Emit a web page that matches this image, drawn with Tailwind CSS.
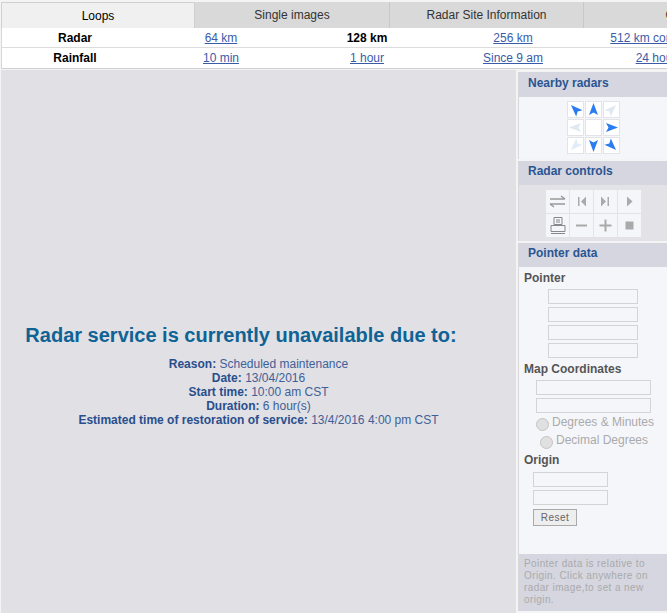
<!doctype html>
<html><head><meta charset="utf-8"><script src="https://cdn.jsdelivr.net/npm/@tailwindcss/browser@4"></script></head>
<body class="bg-white">
<div class="w-[667px] h-[613px] overflow-hidden bg-[#f4f4f4] font-['Liberation_Sans',sans-serif] text-[12px] flex flex-col">
  <div class="flex w-[800px] h-[26px] mt-[2px] pl-[1px] shrink-0 text-[#333]">
    <div class="w-[194px] flex items-center justify-center bg-[#f0f0f0] border-t border-l border-r border-[#d0d0d0] font-normal text-black">Loops</div>
    <div class="w-[194px] flex items-center justify-center bg-[#d9d9d9]">Single images</div>
    <div class="w-[194px] flex items-center justify-center bg-[#d9d9d9] border-l border-[#c8c8c8]">Radar Site Information</div>
    <div class="w-[194px] flex items-center justify-center bg-[#d9d9d9] border-l border-[#c8c8c8]">Other</div>
  </div>
  <div class="w-[800px] bg-white border-l border-[#d8d8d8] ml-[1px] shrink-0">
    <div class="flex h-[20px] items-center border-b border-[#dcdcdc] text-center">
      <div class="w-[146px] font-bold text-black">Radar</div>
      <a class="w-[146px] underline text-[#3a5ca8]">64 km</a>
      <div class="w-[146px] font-bold text-black">128 km</div>
      <a class="w-[146px] underline text-[#3a5ca8]">256 km</a>
      <a class="w-[146px] underline text-[#3a5ca8] whitespace-nowrap">512 km composite</a>
    </div>
    <div class="flex h-[21px] items-center border-b border-[#cfcfcf] text-center">
      <div class="w-[146px] font-bold text-black">Rainfall</div>
      <a class="w-[146px] underline text-[#3a5ca8]">10 min</a>
      <a class="w-[146px] underline text-[#3a5ca8]">1 hour</a>
      <a class="w-[146px] underline text-[#3a5ca8]">Since 9 am</a>
      <a class="w-[146px] underline text-[#3a5ca8] whitespace-nowrap">24 hours</a>
    </div>
  </div>
  <div class="flex flex-1 mt-[1px] pl-[1px] min-h-0">
    <main class="w-[515px] bg-[#e0e0e5] flex flex-col items-center pt-[254px] shrink-0">
      <h1 class="text-[20px] leading-[23px] font-bold text-[#0f6394] pr-[35px] whitespace-nowrap">Radar service is currently unavailable due to:</h1>
      <div class="mt-[10px] text-center leading-[14px] text-[#3f5f96]">
        <div><b class="text-[#2a4e8c]">Reason:</b> Scheduled maintenance</div>
        <div><b class="text-[#2a4e8c]">Date:</b> 13/04/2016</div>
        <div><b class="text-[#2a4e8c]">Start time:</b> 10:00 am CST</div>
        <div><b class="text-[#2a4e8c]">Duration:</b> 6 hour(s)</div>
        <div><b class="text-[#2a4e8c]">Estimated time of restoration of service:</b> 13/4/2016 4:00 pm CST</div>
      </div>
    </main>
    <aside class="w-[149px] ml-[2px] pt-[2px] flex flex-col shrink-0">
      <section class="h-[87px] bg-[#f5f6fa] border-l border-[#d8d8d8]">
        <h2 class="h-[25px] bg-[#d5d6e0] pl-[9px] pt-[4px] leading-[14px] font-bold text-[#2a5591]">Nearby radars</h2>
        <div class="grid grid-cols-[15px_15px_15px] grid-rows-[15px_15px_15px] gap-[3px] w-max ml-[49px] mt-[5px]">
          <div class="bg-white outline outline-[#e4e4e8]"><svg viewBox="0 0 15 15" class="w-[15px] h-[15px]"><polygon points="7.5,1 12,13 7.5,10.5 3,13" fill="#2a7cf0" transform="rotate(-45 7.5 7.5)"/></svg></div>
          <div class="bg-white outline outline-[#e4e4e8]"><svg viewBox="0 0 15 15" class="w-[15px] h-[15px]"><polygon points="7.5,1 12,13 7.5,10.5 3,13" fill="#2a7cf0"/></svg></div>
          <div class="bg-white outline outline-[#e4e4e8]"><svg viewBox="0 0 15 15" class="w-[15px] h-[15px]"><polygon points="7.5,1 12,13 7.5,10.5 3,13" fill="#e2e8f2" transform="rotate(45 7.5 7.5)"/></svg></div>
          <div class="bg-white outline outline-[#e4e4e8]"><svg viewBox="0 0 15 15" class="w-[15px] h-[15px]"><polygon points="7.5,1 12,13 7.5,10.5 3,13" fill="#e2e8f2" transform="rotate(-90 7.5 7.5)"/></svg></div>
          <div class="bg-white outline outline-[#e4e4e8]"></div>
          <div class="bg-white outline outline-[#e4e4e8]"><svg viewBox="0 0 15 15" class="w-[15px] h-[15px]"><polygon points="7.5,1 12,13 7.5,10.5 3,13" fill="#2a7cf0" transform="rotate(90 7.5 7.5)"/></svg></div>
          <div class="bg-white outline outline-[#e4e4e8]"><svg viewBox="0 0 15 15" class="w-[15px] h-[15px]"><polygon points="7.5,1 12,13 7.5,10.5 3,13" fill="#e2ebf8" transform="rotate(-135 7.5 7.5)"/></svg></div>
          <div class="bg-white outline outline-[#e4e4e8]"><svg viewBox="0 0 15 15" class="w-[15px] h-[15px]"><polygon points="7.5,1 12,13 7.5,10.5 3,13" fill="#2a7cf0" transform="rotate(180 7.5 7.5)"/></svg></div>
          <div class="bg-white outline outline-[#e4e4e8]"><svg viewBox="0 0 15 15" class="w-[15px] h-[15px]"><polygon points="7.5,1 12,13 7.5,10.5 3,13" fill="#2a7cf0" transform="rotate(135 7.5 7.5)"/></svg></div>
        </div>
      </section>
      <section class="h-[80px] mt-[2px] bg-[#e2e2e7] border-l border-[#d8d8d8]">
        <h2 class="h-[24px] bg-[#d5d6e0] pl-[9px] pt-[3px] leading-[14px] font-bold text-[#2a5591]">Radar controls</h2>
        <div class="grid grid-cols-[23px_23px_23px_23px] grid-rows-[23px_23px] gap-[1px] w-max ml-[27px] mt-[5px]">
          <div class="bg-[#f5f6fa] flex items-center justify-center"><svg viewBox="0 0 23 23" class="w-[23px] h-[23px]"><path d="M4 9H19M19 9L15 6M4 14H19M4 14L8 17" stroke="#999" stroke-width="1.5" fill="none"/></svg></div>
          <div class="bg-[#f5f6fa]"><svg viewBox="0 0 23 23" class="w-[23px] h-[23px]"><path d="M8 7h1.5v9H8zM16 6.5v10l-5-5z" fill="#aaa"/></svg></div>
          <div class="bg-[#f5f6fa]"><svg viewBox="0 0 23 23" class="w-[23px] h-[23px]"><path d="M15 7h-1.5v9H15zM7 6.5v10l5-5z" fill="#aaa"/></svg></div>
          <div class="bg-[#f5f6fa]"><svg viewBox="0 0 23 23" class="w-[23px] h-[23px]"><path d="M9 6.5v10l5.5-5z" fill="#aaa"/></svg></div>
          <div class="bg-[#f5f6fa]"><svg viewBox="0 0 23 23" class="w-[23px] h-[23px]"><path d="M8 3.5h8v7H8zM5 11.5h14v6H5zM5 19.5h14M10 6h4M10 8h4" stroke="#888" fill="none"/></svg></div>
          <div class="bg-[#f5f6fa]"><svg viewBox="0 0 23 23" class="w-[23px] h-[23px]"><path d="M6 10.5h11v2H6z" fill="#aaa"/></svg></div>
          <div class="bg-[#f5f6fa]"><svg viewBox="0 0 23 23" class="w-[23px] h-[23px]"><path d="M5.5 10.5h12v2h-12zM10.5 5.5h2v12h-2z" fill="#aaa"/></svg></div>
          <div class="bg-[#f5f6fa]"><svg viewBox="0 0 23 23" class="w-[23px] h-[23px]"><path d="M7.5 7.5h8v8h-8z" fill="#aaa"/></svg></div>
        </div>
      </section>
      <section class="h-[368px] mt-[2px] border-l border-[#d8d8d8] bg-[#f5f6fa] flex flex-col">
        <h2 class="h-[24px] shrink-0 bg-[#d5d6e0] pl-[9px] pt-[3px] leading-[14px] font-bold text-[#2a5591]">Pointer data</h2>
        <div class="flex-1 pl-[5px] text-[#555]">
          <div class="font-bold leading-[14px] mt-[4px]">Pointer</div>
          <div class="flex flex-col gap-[3px] ml-[24px] mt-[4px]">
            <input class="block w-[90px] h-[15px] border border-[#d4d4d4] bg-[#f5f6fa]"><input class="block w-[90px] h-[15px] border border-[#d4d4d4] bg-[#f5f6fa]"><input class="block w-[90px] h-[15px] border border-[#d4d4d4] bg-[#f5f6fa]"><input class="block w-[90px] h-[15px] border border-[#d4d4d4] bg-[#f5f6fa]">
          </div>
          <div class="font-bold leading-[14px] mt-[4px]">Map Coordinates</div>
          <div class="flex flex-col gap-[3px] ml-[12px] mt-[4px]">
            <input class="block w-[115px] h-[15px] border border-[#d4d4d4] bg-[#f5f6fa]"><input class="block w-[115px] h-[15px] border border-[#d4d4d4] bg-[#f5f6fa]">
          </div>
          <div class="flex items-start ml-[12px] mt-[2px] h-[18px] text-[#aaa] leading-[14px]"><span class="w-[13px] h-[13px] mt-[3px] rounded-full bg-[#e0e0e0] border border-[#c4c4c4]"></span><span class="ml-[3px]">Degrees &amp; Minutes</span></div>
          <div class="flex items-start ml-[16px] h-[18px] text-[#aaa] leading-[14px]"><span class="w-[13px] h-[13px] mt-[3px] rounded-full bg-[#e0e0e0] border border-[#c4c4c4]"></span><span class="ml-[3px]">Decimal Degrees</span></div>
          <div class="font-bold leading-[14px] mt-[2px]">Origin</div>
          <div class="flex flex-col gap-[3px] ml-[9px] mt-[5px]">
            <input class="block w-[75px] h-[15px] border border-[#d4d4d4] bg-[#f5f6fa]"><input class="block w-[75px] h-[15px] border border-[#d4d4d4] bg-[#f5f6fa]">
          </div>
          <button class="block ml-[9px] mt-[4px] w-[44px] h-[17px] bg-[#eeeeee] border border-[#aaa] text-[10px] tracking-[0.5px] text-[#666]">Reset</button>
        </div>
        <div class="h-[57px] shrink-0 bg-[#d5d6e0] pl-[5px] pt-[4px] pr-[8px] text-[10px] leading-[12px] tracking-[0.4px] text-[#aaa]">Pointer data is relative to Origin. Click anywhere on radar image,to set a new origin.</div>
      </section>
    </aside>
  </div>
</div>
</body></html>
